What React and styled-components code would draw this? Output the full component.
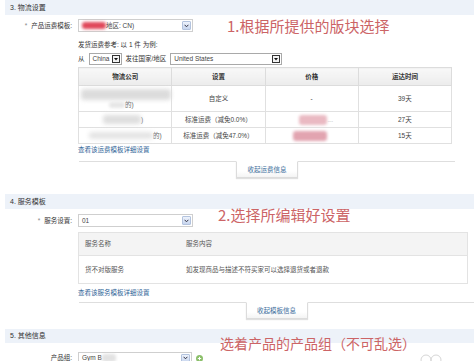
import React from "react";
import styled, { createGlobalStyle } from "styled-components";

const Global = createGlobalStyle`
  html, body { margin: 0; padding: 0; background: #fff; }
  body {
    font-family: "Liberation Sans", "Noto Sans CJK SC", sans-serif;
    color: #333;
    -webkit-font-smoothing: antialiased;
  }
`;

const Page = styled.div`
  position: relative;
  width: 474px;
  height: 361px;
  overflow: hidden;
  font-size: 6.5px;
  line-height: 10px;
`;

const Section = styled.div`
  display: flex;
  flex-direction: column;
  margin-top: ${(p) => p.$mt || 0}px;
`;

const SectionHeader = styled.div`
  margin-left: 5px;
  height: ${(p) => p.$h || 15}px;
  background: #edf2f9;
  display: flex;
  align-items: center;
  padding-left: 5px;
  font-size: 7px;
  color: #333;
`;

const FormRow = styled.div`
  display: grid;
  grid-template-columns: 72px 1fr;
  column-gap: 6px;
  align-items: center;
  margin-top: ${(p) => p.$mt || 0}px;
`;

const Label = styled.div`
  text-align: right;
  font-size: 6.5px;
  color: #333;
  white-space: nowrap;
`;

const Star = styled.span`
  color: #888;
  margin-right: 4px;
`;

const Content = styled.div`
  display: flex;
  flex-direction: column;
  padding-left: 78px;
  margin-top: ${(p) => p.$mt || 0}px;
`;

const SelectBox = styled.div`
  box-sizing: border-box;
  width: ${(p) => p.$w}px;
  height: ${(p) => p.$h || 13}px;
  border: 1px solid #cfcfcf;
  background: #fff;
  display: flex;
  align-items: center;
  padding-left: 3px;
  padding-right: 1px;
  font-size: 6.5px;
  color: #444;
`;

const SelectValue = styled.span`
  display: flex;
  align-items: center;
  white-space: nowrap;
`;

const XpArrow = styled.span`
  margin-left: auto;
  width: 9px;
  height: 9px;
  box-sizing: border-box;
  border: 1px solid #b3c3de;
  border-radius: 1px;
  background: linear-gradient(#eef3fc, #c7d5ee);
  display: flex;
  align-items: center;
  justify-content: center;
`;

const MiniSelect = styled.div`
  box-sizing: border-box;
  width: ${(p) => p.$w}px;
  height: 12px;
  border: 1px solid #a9a9a9;
  background: #fff;
  display: flex;
  align-items: center;
  padding-left: 3px;
  padding-right: 1px;
  font-size: 6.5px;
  color: #444;
`;

const MiniArrow = styled.span`
  margin-left: auto;
  width: 8px;
  height: 8px;
  box-sizing: border-box;
  border: 1px solid #333;
  background: #f3f3f3;
  display: flex;
  align-items: center;
  justify-content: center;
`;

const Line = styled.div`
  display: flex;
  align-items: center;
  gap: ${(p) => (p.$gap === undefined ? 4 : p.$gap)}px;
  height: ${(p) => p.$h || 10}px;
  margin-top: ${(p) => p.$mt || 0}px;
  white-space: nowrap;
`;

const Blob = styled.span`
  display: inline-block;
  width: ${(p) => p.$w}px;
  height: ${(p) => p.$h}px;
  background: ${(p) => p.$c};
  filter: blur(${(p) => p.$b || 1.5}px);
  border-radius: 3px;
  margin-left: ${(p) => p.$ml || 0}px;
  vertical-align: middle;
`;

const ShipTable = styled.table`
  margin-top: 2px;
  width: 374px;
  border-collapse: collapse;
  table-layout: fixed;
  font-size: 6.5px;
  color: #444;
`;

const Th = styled.th`
  height: 17px;
  padding: 0;
  border: 1px solid #dcdcdc;
  background: linear-gradient(#f8f8f8, #ececec);
  font-weight: bold;
  color: #333;
  text-align: center;
`;

const Td = styled.td`
  height: ${(p) => p.$h}px;
  padding: 0;
  border: 1px solid #e0e0e0;
  text-align: center;
`;

const BlurCell = styled.div`
  display: flex;
  flex-direction: column;
  align-items: flex-start;
  padding-left: ${(p) => p.$pl || 0}px;
  gap: 1px;
`;

const BlurLine = styled.div`
  display: flex;
  align-items: center;
  padding-left: ${(p) => p.$pl || 0}px;
  height: ${(p) => p.$h || 10}px;
  color: #666;
`;

const Dots = styled.span`
  color: #999;
  margin-left: 1px;
  font-size: 5px;
`;

const Link = styled.div`
  color: #2f6497;
  font-size: 6.5px;
  height: 10px;
  line-height: 10px;
  margin-top: ${(p) => p.$mt || 0}px;
`;

const Divider = styled.div`
  margin-left: 79px;
  width: ${(p) => p.$w}px;
  border-top: 1px solid #dedede;
  margin-top: ${(p) => p.$mt || 0}px;
  display: flex;
  justify-content: center;
`;

const Tab = styled.div`
  margin-top: -1px;
  width: 62px;
  height: 17px;
  box-sizing: border-box;
  border: 1px solid #dcdcdc;
  border-top-color: #fff;
  background: linear-gradient(#fff 60%, #f4f4f4);
  box-shadow: 0 1px 1px rgba(0, 0, 0, 0.12);
  color: #3a6c9a;
  font-size: 6.5px;
  display: flex;
  align-items: center;
  justify-content: center;
`;

const ServiceTable = styled.div`
  margin-top: 5px;
  width: 388px;
  border: 1px solid #e3e3e3;
  display: flex;
  flex-direction: column;
  color: #555;
`;

const ServiceRow = styled.div`
  display: grid;
  grid-template-columns: 101px 1fr;
  align-items: center;
  height: ${(p) => p.$h}px;
  background: ${(p) => p.$bg || "#fff"};
  border-top: ${(p) => (p.$first ? "none" : "1px solid #e3e3e3")};
  padding-left: 6px;
`;

const Annotation = styled.div`
  position: absolute;
  left: ${(p) => p.$x}px;
  top: ${(p) => p.$y}px;
  font-family: "Noto Sans CJK SC", sans-serif;
  font-size: ${(p) => p.$s}px;
  line-height: 18px;
  color: #cc6466;
  white-space: nowrap;
`;

const AddIcon = styled.span`
  width: 7px;
  height: 7px;
  border-radius: 50%;
  background: #8cc06b;
  display: inline-flex;
  align-items: center;
  justify-content: center;
  margin-left: 4px;
`;

const Watermark = styled.svg`
  position: absolute;
  left: 420px;
  top: 352px;
`;

const Chevron = () => (
  <svg width="5" height="4" viewBox="0 0 5 4">
    <path d="M0.6 0.8 L2.5 2.8 L4.4 0.8" fill="none" stroke="#334" strokeWidth="1" />
  </svg>
);

const Tri = () => (
  <svg width="4" height="3" viewBox="0 0 4 3">
    <path d="M0 0 H4 L2 2.5 Z" fill="#111" />
  </svg>
);

const XpSelect = ({ w, children }) => (
  <SelectBox $w={w}>
    <SelectValue>{children}</SelectValue>
    <XpArrow>
      <Chevron />
    </XpArrow>
  </SelectBox>
);

export default function App() {
  return (
    <Page>
      <Global />

      <Section>
        <SectionHeader>3. 物流设置</SectionHeader>
        <FormRow $mt={4}>
          <Label>
            <Star>*</Star>产品运费模板:
          </Label>
          <XpSelect w={115}>
            <Blob $w={24} $h={7} $c="#e0485a" $b={1.6} />
            <span>地区: CN)</span>
          </XpSelect>
        </FormRow>
        <Content $mt={8}>
          <Line>发货运费参考: 以 1 件 为例:</Line>
          <Line $mt={3} $h={12}>
            <span>从</span>
            <MiniSelect $w={33}>
              China
              <MiniArrow>
                <Tri />
              </MiniArrow>
            </MiniSelect>
            <span>发往国家/地区</span>
            <MiniSelect $w={112}>
              United States
              <MiniArrow>
                <Tri />
              </MiniArrow>
            </MiniSelect>
          </Line>
          <ShipTable>
            <thead>
              <tr>
                <Th>物流公司</Th>
                <Th>设置</Th>
                <Th>价格</Th>
                <Th>运达时间</Th>
              </tr>
            </thead>
            <tbody>
              <tr>
                <Td $h={25}>
                  <BlurCell $pl={2}>
                    <Blob $w={90} $h={11} $c="#dcdcdc" $b={2} />
                    <BlurLine $pl={28} $h={8}>
                      <Blob $w={16} $h={6} $c="#e6e6e6" $b={1.5} />
                      <span>的)</span>
                    </BlurLine>
                  </BlurCell>
                </Td>
                <Td $h={25}>自定义</Td>
                <Td $h={25}>-</Td>
                <Td $h={25}>39天</Td>
              </tr>
              <tr>
                <Td $h={15}>
                  <BlurLine $pl={24} $h={12}>
                    <Blob $w={38} $h={9} $c="#dedede" $b={2} />
                    <span>)</span>
                  </BlurLine>
                </Td>
                <Td $h={15}>标准运费（减免0.0%）</Td>
                <Td $h={15}>
                  <BlurLine $pl={33} $h={12}>
                    <Blob $w={28} $h={10} $c="#eab9c2" $b={1.6} />
                    <Dots>....</Dots>
                  </BlurLine>
                </Td>
                <Td $h={15}>27天</Td>
              </tr>
              <tr>
                <Td $h={15}>
                  <BlurLine $pl={10} $h={12}>
                    <Blob $w={64} $h={7} $c="#e4e4e4" $b={2} />
                    <span>的)</span>
                  </BlurLine>
                </Td>
                <Td $h={15}>标准运费（减免47.0%）</Td>
                <Td $h={15}>
                  <BlurLine $pl={27} $h={12}>
                    <Blob $w={34} $h={10} $c="#e2a4b0" $b={1.6} />
                  </BlurLine>
                </Td>
                <Td $h={15}>15天</Td>
              </tr>
            </tbody>
          </ShipTable>
          <Link $mt={1}>查看该运费模板详细设置</Link>
        </Content>
        <Divider $w={376} $mt={6}>
          <Tab>收起运费信息</Tab>
        </Divider>
      </Section>

      <Section $mt={16}>
        <SectionHeader>4. 服务模板</SectionHeader>
        <FormRow $mt={5}>
          <Label>
            <Star>*</Star>服务设置:
          </Label>
          <XpSelect w={115}>
            <span>01</span>
          </XpSelect>
        </FormRow>
        <Content>
          <ServiceTable>
            <ServiceRow $h={22} $bg="#f4f4f4" $first>
              <span>服务名称</span>
              <span>服务内容</span>
            </ServiceRow>
            <ServiceRow $h={27}>
              <span>货不对版服务</span>
              <span>如发现商品与描述不符买家可以选择退货或者退款</span>
            </ServiceRow>
          </ServiceTable>
          <Link $mt={4}>查看该服务模板详细设置</Link>
        </Content>
        <Divider $w={395} $mt={4}>
          <Tab>收起模板信息</Tab>
        </Divider>
      </Section>

      <Section $mt={10}>
        <SectionHeader $h={14}>5. 其他信息</SectionHeader>
        <FormRow $mt={9}>
          <Label>产品组:</Label>
          <Line $gap={0} $h={12}>
            <XpSelect w={114}>
              <span>Gym B</span>
              <Blob $w={14} $h={8} $c="#e2e2e2" $b={1.5} />
            </XpSelect>
            <AddIcon>
              <svg width="5" height="5" viewBox="0 0 5 5">
                <path d="M2.5 0.8 V4.2 M0.8 2.5 H4.2" stroke="#fff" strokeWidth="1" />
              </svg>
            </AddIcon>
          </Line>
        </FormRow>
      </Section>

      <Annotation $x={227} $y={17} $s={15}>1.根据所提供的版块选择</Annotation>
      <Annotation $x={218} $y={206} $s={15}>2.选择所编辑好设置</Annotation>
      <Annotation $x={220} $y={334} $s={14}>选着产品的产品组（不可乱选）</Annotation>

      <Watermark width="24" height="12" viewBox="0 0 24 12">
        <circle cx="6" cy="8" r="5" fill="none" stroke="#d6d6d6" strokeWidth="1" />
        <circle cx="16" cy="8" r="5" fill="none" stroke="#d6d6d6" strokeWidth="1" />
      </Watermark>
    </Page>
  );
}
